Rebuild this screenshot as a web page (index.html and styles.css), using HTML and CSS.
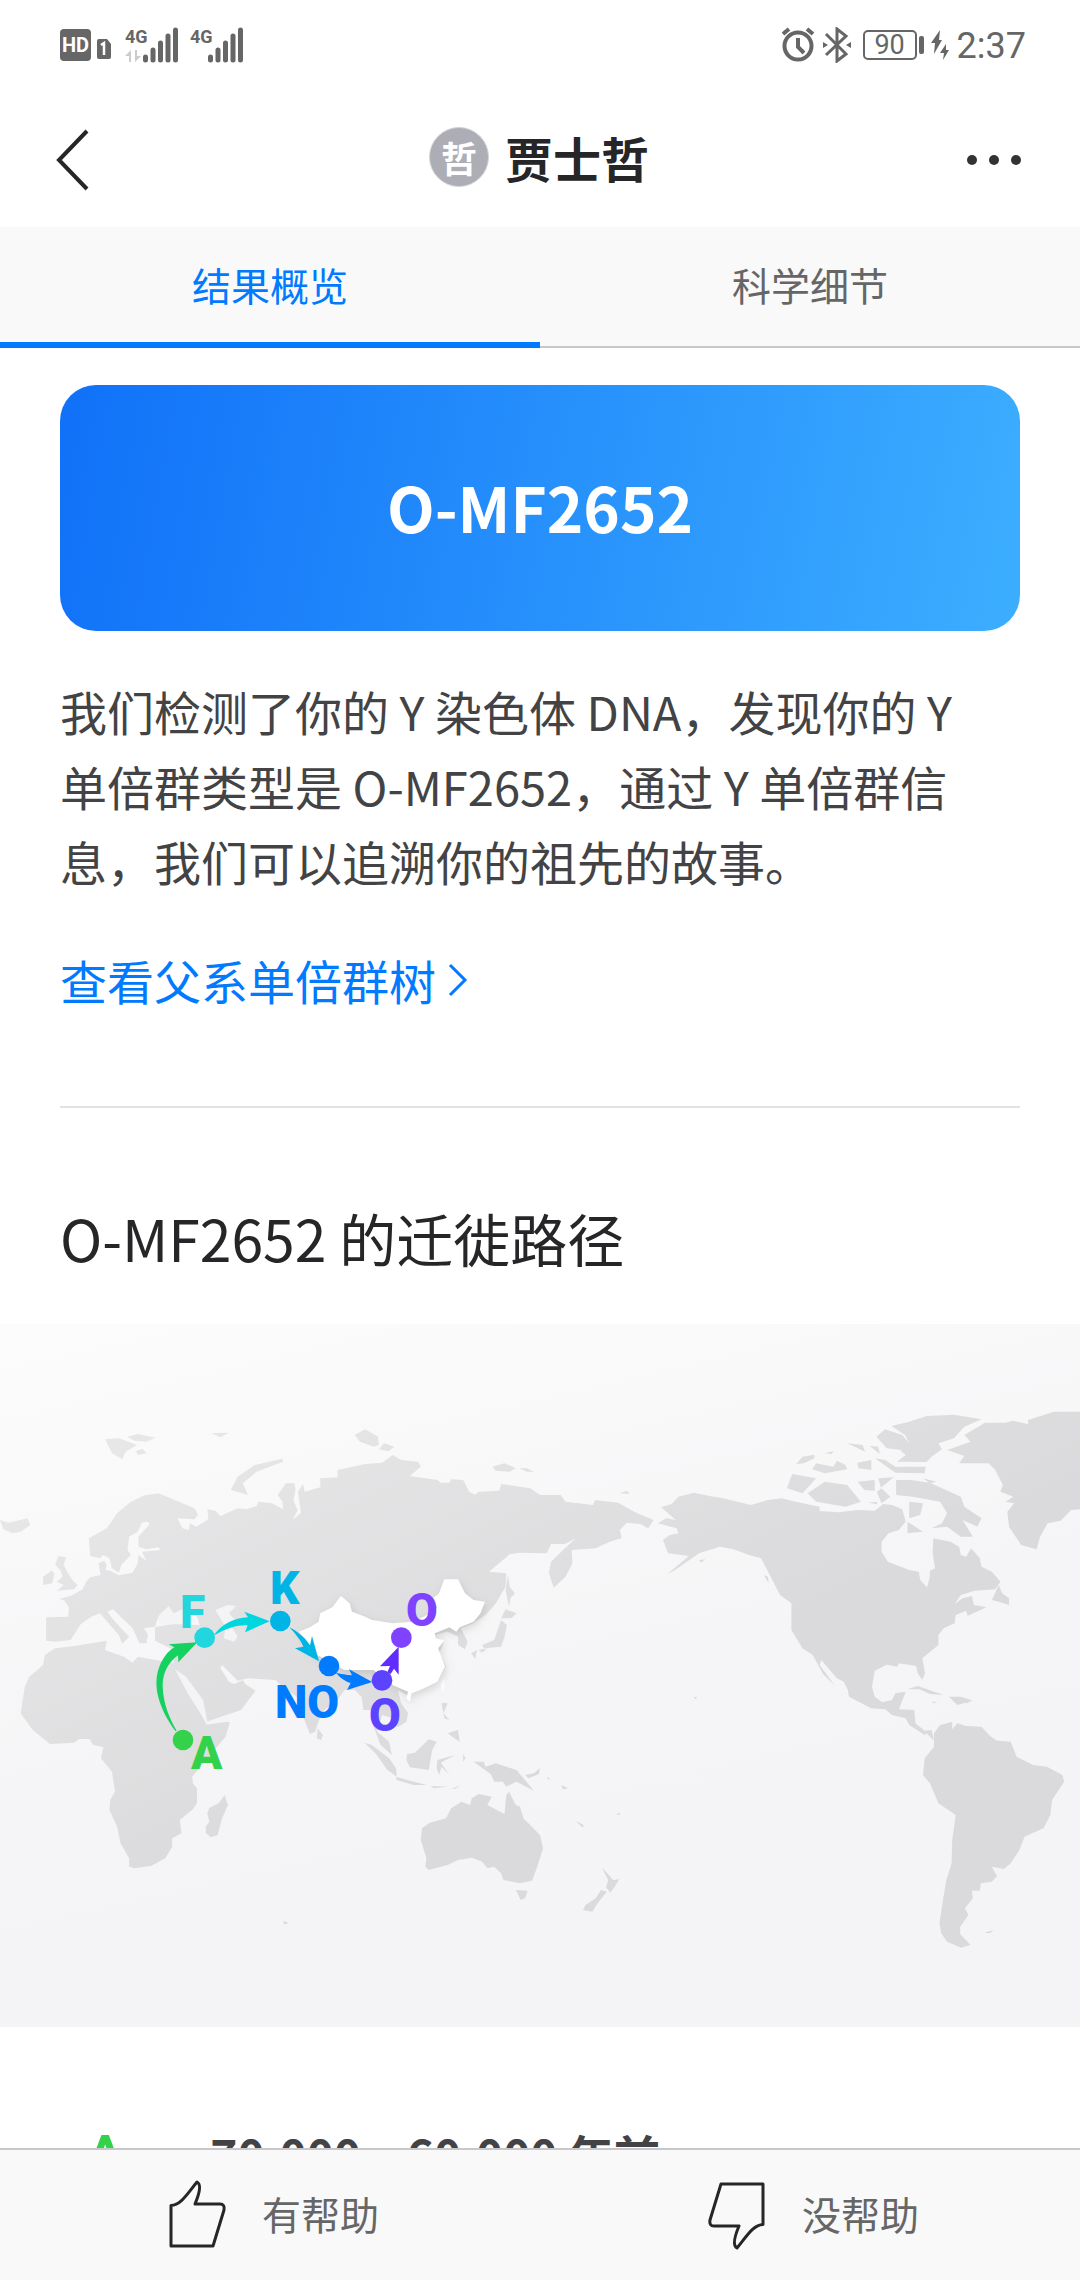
FILE: index.html
```html
<!DOCTYPE html>
<html lang="zh-CN">
<head>
  <meta charset="UTF-8" />
  <meta name="viewport" content="width=device-width, initial-scale=1.0" />
  <title>贾士哲 - 结果概览</title>
  <link rel="stylesheet" href="styles.css">
</head>
<body>
  <div class="status-bar">
    <div class="status-left">
      <span class="hd">HD</span>
      <svg class="sim" viewBox="0 0 14 20" width="14" height="20"><path d="M2 0h8l4 5v13q0 2-2 2H2q-2 0-2-2V2q0-2 2-2z" fill="#666"/><path d="M4 6l3-2v12" fill="none" stroke="#fff" stroke-width="2.5"/></svg>
      <svg class="signal" viewBox="0 -10 54 56" width="54" height="56">
        <text x="0" y="16" class="net">4G</text>
        <path d="M0 29l6-6v12H4v-6zM10 23h2v6h4l-6 6z" fill="#ccc"/>
        <path d="M20.500 30v3M28 23v10M35.500 16v17M43 9v24M50.500 3v30" class="bars"/>
      </svg>
      <svg class="signal" viewBox="0 -10 54 56" width="54" height="56">
        <text x="0" y="16" class="net">4G</text>
        <path d="M20.500 30v3M28 23v10M35.500 16v17M43 9v24M50.500 3v30" class="bars"/>
      </svg>
    </div>
    <div class="status-right">
      <svg viewBox="0 0 34 36" width="34" height="36" class="line"><circle cx="17" cy="19" r="13.5"/><path d="M17 11v9l6 6M2 7l6-5M32 7l-6-5"/></svg>
      <svg viewBox="0 0 28 36" width="28" height="36" class="line thin"><path d="M3 7l20 20-9 7V2l9 7L3 28"/><path d="M0 15l5 3-5 3zM28 15l-5 3 5 3z" class="solid"/></svg>
      <span class="battery">90</span>
      <svg viewBox="0 0 18 32" width="18" height="32"><path d="M9 1L0 14h4L3 25l8-14H8zM15 15l-6 9h4l-1 7 6-10h-3z" fill="#666"/></svg>
      <span class="time">2:37</span>
    </div>
  </div>

  <header class="nav">
    <button class="icon-btn" aria-label="返回">
      <svg viewBox="0 0 34 62" width="34" height="62"><path d="M31 2L3 31l28 29" fill="none" stroke="#262628" stroke-width="4"/></svg>
    </button>
    <div class="profile">
      <span class="avatar">哲</span>
      <h1>贾士哲</h1>
    </div>
    <button class="icon-btn" aria-label="更多">
      <svg viewBox="0 0 56 12" width="56" height="12" fill="#333"><circle cx="6" cy="6" r="5"/><circle cx="28" cy="6" r="5"/><circle cx="50" cy="6" r="5"/></svg>
    </button>
  </header>

  <nav class="tabs">
    <a href="#overview" class="tab active">结果概览</a>
    <a href="#details" class="tab">科学细节</a>
  </nav>

  <main id="overview">
    <section class="intro">
      <div class="haplogroup">O-MF2652</div>
      <p>我们检测了你的 Y 染色体 DNA，发现你的 Y 单倍群类型是 O-MF2652，通过 Y 单倍群信息，我们可以追溯你的祖先的故事。</p>
      <a href="#tree" class="tree-link">查看父系单倍群树
        <svg viewBox="0 0 20 34" width="20" height="34"><path d="M2 2l15 15L2 32" fill="none" stroke="#007aff" stroke-width="3"/></svg>
      </a>
    </section>

    <h2>O-MF2652 的迁徙路径</h2>

    <svg class="map" viewBox="0 0 1080 703">
      <defs>
        <linearGradient id="sea" x1="0" y1="0" x2=".35" y2="1">
          <stop offset="0" stop-color="#fcfcfc"/>
          <stop offset=".6" stop-color="#f5f5f7"/>
          <stop offset="1" stop-color="#f4f4f7"/>
        </linearGradient>
        <linearGradient id="land" gradientUnits="userSpaceOnUse" x1="500" y1="300" x2="1100" y2="1500">
          <stop offset="0" stop-color="#e7e7e8"/>
          <stop offset="1" stop-color="#dadadc"/>
        </linearGradient>
        <filter id="glow" x="-10%" y="-10%" width="120%" height="120%">
          <feDropShadow dx="4" dy="10" stdDeviation="12" flood-color="#888" flood-opacity=".3"/>
        </filter>
      </defs>
      <rect width="1080" height="703" fill="url(#sea)"/>

      <svg width="1080" height="703" viewBox="0 12 3136 2109" preserveAspectRatio="none">
        <g fill="url(#land)">
          <!-- Eurasia -->
          <path d="M134 892L198 890 200 862 187 842 172 836 205 828 240 808 250 785 262 772 292 765 286 730 302 722 310 735 306 750 320 752 345 766 385 758 400 730 402 705 425 722 412 695 465 690 460 682 425 688 402 680 402 650 435 612 428 605 412 608 400 635 375 650 370 690 380 705 352 735 345 758 325 745 318 715 300 705 290 715 262 708 258 655 310 625 340 580 380 545 420 526 460 520 520 545 565 565 575 585 565 598 515 595 530 625 548 630 552 610 570 620 605 598 602 568 625 572 640 588 690 565 715 568 745 558 750 545 790 550 822 568 820 545 806 525 830 490 855 490 858 510 852 540 864 570 850 600 874 578 865 515 880 492 885 515 930 502 930 475 980 472 980 450 1060 432 1110 428 1140 405 1165 420 1215 425 1222 440 1190 468 1270 480 1280 488 1305 488 1310 478 1345 480 1362 515 1380 524 1390 515 1450 512 1455 492 1540 505 1568 525 1628 525 1642 545 1722 555 1728 540 1795 548 1850 580 1898 600 1882 625 1860 612 1820 608 1800 630 1805 655 1770 665 1730 685 1660 690 1662 730 1642 770 1608 803 1594 760 1600 725 1635 690 1672 655 1640 672 1600 672 1588 700 1568 700 1510 698 1480 703 1420 755 1470 760 1468 800 1440 850 1410 885 1375 910 1338 925 1358 965 1350 988 1330 975 1330 950 1300 935 1260 945 1268 958 1290 965 1275 1000 1295 1040 1270 1085 1195 1115 1190 1140 1182 1125 1155 1110 1165 1150 1185 1180 1180 1205 1155 1222 1140 1195 1110 1185 1095 1235 1130 1265 1138 1305 1105 1275 1085 1220 1078 1170 1055 1170 1050 1130 1030 1110 1000 1110 980 1140 935 1175 915 1235 900 1242 880 1190 862 1130 820 1100 800 1080 720 1075 690 1082 645 1035 640 1045 665 1085 680 1092 705 1080 712 1092 742 1112 700 1170 600 1205 560 1130 510 1050 495 985 450 962 450 922 500 912 580 915 572 890 530 870 505 882 490 858 460 890 450 920 418 925 430 945 425 970 405 970 385 925 328 868 312 875 330 900 375 950 355 972 345 945 290 880 265 890 235 912 205 960 160 965 134 962Z"/>
          <!-- Africa -->
          <path d="M160 985L215 978 310 962 305 990 360 1010 385 1028 400 1010 465 1022 510 1030 545 1090 575 1160 600 1210 668 1205 655 1250 590 1330 558 1370 560 1390 572 1405 572 1450 560 1468 522 1500 527 1540 500 1555 500 1580 480 1615 440 1637 390 1645 375 1640 375 1615 350 1570 340 1520 318 1470 320 1440 334 1415 325 1355 293 1315 300 1282 270 1275 260 1257 230 1257 215 1268 145 1272 95 1230 60 1180 72 1100 85 1070 125 1035 130 1005Z"/>
          <path d="M652 1425L662 1455 645 1495 632 1545 612 1552 598 1540 597 1520 608 1505 602 1480 608 1463 635 1450Z"/>
          <!-- British Isles, Iceland -->
          <path d="M170 708L192 712 185 735 195 755 212 782 225 795 215 808 165 812 185 795 165 785 182 770 175 750 160 735ZM125 770L150 752 158 760 152 790 125 795Z"/>
          <path d="M0 600L25 608 80 595 88 615 60 635 35 640 10 628Z"/>
          <!-- Arctic islands -->
          <path d="M305 358L345 355 398 375 365 395 355 418 325 400ZM370 350L400 342 452 353 425 365 390 362ZM395 392L415 387 425 400 400 405Z"/>
          <path d="M613 340L665 338 640 352ZM670 510L690 470 740 435 820 416 822 425 745 455 705 490 720 525ZM1030 345L1060 328 1098 350 1100 375 1085 380 1045 365ZM1100 388L1115 370 1145 380 1128 394ZM1430 440L1465 430 1498 445 1480 455 1440 452ZM1508 445L1530 445 1550 455 1530 455ZM1800 520L1820 512 1828 522Z"/>
          <!-- Japan, Sakhalin, Taiwan -->
          <path d="M1475 765L1480 800 1495 820 1482 835 1478 860 1468 810Z"/>
          <path d="M1468 868L1500 880 1485 895 1455 895ZM1455 900L1472 915 1465 950 1455 980 1405 985 1400 975 1435 960ZM1368 1000L1385 990 1380 1018ZM1390 990L1415 985 1400 998Z"/>
          <path d="M1280 1090L1290 1075 1292 1095 1284 1118Z" fill="#fff"/>
          <!-- South-east Asia -->
          <path d="M922 1225L938 1245 932 1260 920 1255ZM1058 1268L1080 1275 1130 1315 1150 1345 1152 1370 1125 1350 1090 1300ZM1150 1370L1190 1382 1240 1395 1200 1395 1152 1380ZM1182 1302L1205 1298 1245 1258 1268 1265 1255 1290 1245 1350 1190 1342 1180 1320ZM1270 1320L1322 1305 1290 1322 1280 1328 1305 1365 1282 1340 1275 1365 1268 1345ZM1282 1148L1300 1150 1288 1180 1305 1200 1290 1195ZM1300 1240L1330 1230 1335 1265 1315 1252ZM1258 1235L1278 1215ZM1375 1325L1405 1325 1410 1340 1440 1330 1500 1350 1550 1412 1500 1385 1470 1400 1460 1385 1435 1385 1425 1362ZM1525 1365L1550 1360 1568 1345 1565 1362 1535 1375ZM1345 1302L1352 1315 1345 1325ZM1250 1398L1300 1400 1260 1405ZM1310 1408L1338 1394 1322 1406Z"/>
          <!-- Australia, New Zealand -->
          <path d="M1225 1525L1248 1508 1295 1495 1310 1465 1340 1445 1365 1455 1370 1435 1390 1422 1428 1430 1415 1455 1465 1482 1470 1425 1478 1415 1498 1455 1510 1460 1520 1495 1568 1545 1577 1585 1560 1640 1545 1682 1510 1690 1462 1680 1455 1660 1435 1640 1415 1645 1400 1625 1370 1613 1330 1620 1300 1635 1245 1650 1235 1640 1238 1615 1222 1560ZM1498 1710L1532 1712 1525 1735 1512 1740Z"/>
          <path d="M1748 1643L1768 1665 1780 1680 1798 1678 1785 1700 1772 1718 1760 1702 1766 1680ZM1745 1710L1762 1715 1735 1750 1720 1775 1693 1770 1700 1755 1730 1735ZM1672 1503L1695 1515 1692 1523ZM1788 1482L1802 1478 1798 1486ZM1590 1370L1598 1378 1590 1378ZM1630 1395L1650 1405 1634 1408ZM2014 1130L2024 1132 2020 1138ZM822 1803L838 1808 826 1814Z"/>
          <!-- North and Central America -->
          <path d="M1920 562L1950 552 1970 530 2015 518 2060 528 2100 535 2180 555 2230 540 2270 535 2310 545 2380 560 2380 573 2435 577 2490 570 2540 572 2565 552 2590 555 2620 568 2630 605 2610 630 2580 640 2560 665 2560 695 2578 725 2640 750 2668 755 2672 780 2692 802 2700 770 2700 752 2715 745 2708 700 2710 655 2760 665 2785 680 2790 705 2805 710 2820 685 2845 715 2850 740 2880 755 2905 785 2890 808 2830 812 2790 825 2772 852 2795 835 2822 828 2828 855 2865 862 2810 887 2805 872 2775 885 2772 910 2740 925 2725 945 2725 975 2678 1015 2686 1060 2678 1080 2665 1060 2660 1038 2610 1030 2605 1040 2575 1034 2540 1052 2532 1100 2540 1130 2562 1147 2590 1140 2600 1120 2630 1115 2610 1168 2655 1170 2658 1210 2685 1232 2705 1230 2712 1262 2690 1240 2685 1245 2640 1215 2630 1195 2590 1185 2570 1168 2530 1165 2465 1130 2462 1110 2450 1085 2430 1075 2385 1020 2380 1035 2425 1098 2390 1062 2360 1005 2330 985 2298 930 2298 850 2265 825 2240 775 2210 715 2175 705 2130 688 2090 680 2030 700 1960 750 1938 762 2000 708 1940 700 1925 660 1945 645 1970 640 1965 625 1910 610 1935 595 1962 600Z"/>
          <path d="M2218 765L2230 770 2232 790ZM2262 805L2300 825 2312 850 2290 830ZM2880 840L2900 795 2910 820 2930 835 2930 855 2900 845ZM2635 1108L2665 1098 2740 1125 2700 1122 2670 1108ZM2755 1130L2790 1130 2825 1142 2780 1155ZM2705 1145L2722 1146 2712 1150ZM2800 1145L2818 1147 2806 1150ZM2030 720L2048 718 2036 728Z"/>
          <!-- Canadian Arctic and Greenland -->
          <path d="M2588 318L2640 305 2690 288 2770 284 2850 298 2800 320 2770 355 2725 370 2735 388 2705 410 2690 426 2605 425 2630 405 2615 392 2640 370 2628 345ZM2545 350L2570 328 2620 345 2640 370 2620 390 2575 385ZM2312 432L2330 410 2365 404 2365 415 2335 430ZM2358 448L2370 430 2420 440 2430 422 2455 435 2460 448 2395 460ZM2300 462L2370 475 2330 520 2285 505ZM2345 520L2395 485 2460 495 2500 545 2455 560 2370 545ZM2490 428L2530 420 2530 450 2492 445ZM2540 415L2570 420 2600 440 2688 440 2685 460 2600 458ZM2490 485L2540 480 2540 512 2510 510ZM2550 475L2595 472 2558 503ZM2546 515L2560 505 2585 530 2560 550ZM2602 480L2645 480 2700 488 2790 530 2800 560 2850 595 2838 620 2795 600 2825 650 2790 650 2750 620 2705 625 2735 610 2750 580 2730 545 2650 530 2602 525ZM2640 545L2680 550 2672 585 2640 595ZM2635 605L2680 635 2635 640ZM2460 370L2505 375 2512 395ZM2525 378L2550 380 2555 402ZM2395 400L2420 393 2415 402ZM2680 475L2720 485 2700 490ZM2520 548L2545 545 2548 553Z"/>
          <path d="M3136 275L3060 275 2985 300 2985 312 2940 302 2920 308 2860 308 2800 345 2818 365 2750 390 2800 408 2785 430 2870 430 2890 450 2912 495 2905 515 2942 530 2920 545 2945 550 2925 575 2930 620 2965 675 3010 688 3020 650 3042 610 3080 602 3110 570 3136 568Z"/>
          <!-- South America -->
          <path d="M2712 1240L2730 1215 2765 1205 2765 1228 2780 1210 2805 1218 2850 1220 2875 1248 2895 1262 2935 1265 2952 1310 3000 1335 3040 1340 3085 1365 3090 1385 3055 1440 3050 1485 3030 1525 2975 1550 2960 1590 2935 1630 2915 1647 2880 1640 2895 1668 2880 1685 2848 1690 2845 1712 2822 1712 2825 1735 2802 1765 2812 1785 2788 1820 2788 1842 2818 1875 2790 1883 2750 1865 2733 1840 2728 1810 2738 1740 2748 1680 2763 1630 2765 1560 2775 1485 2725 1450 2700 1390 2680 1365 2685 1315 2712 1280ZM2858 1838L2885 1830 2875 1840Z"/>
        </g>
        <!-- Red Sea, Caspian -->
        <g fill="#f4f4f6">
          <path d="M508 1048L540 1070 590 1140 602 1205 660 1190 665 1204 600 1214 585 1185 545 1120Z"/>
          <path d="M625 870L660 855 685 858 665 880 682 900 672 920 690 950 680 965 650 955 655 920Z"/>
          <path d="M462 885L490 860 505 880 530 868 575 905 480 915 460 905Z"/>
        </g>
        <!-- China -->
        <path filter="url(#glow)" fill="#fff" d="M868 935L900 922 925 905 930 880 965 862 990 828 1015 850 1022 875 1060 890 1080 900 1140 910 1200 905 1250 880 1270 860 1245 845 1275 820 1290 778 1330 778 1350 820 1375 840 1408 845 1395 880 1375 905 1335 922 1325 935 1305 922 1262 940 1265 955 1290 962 1272 985 1292 1040 1270 1085 1220 1110 1195 1120 1190 1145 1180 1135 1185 1115 1140 1095 1110 1070 1085 1050 1000 1050 950 1020 910 1000 888 965Z"/>
      </svg>

      <!-- Migration route -->
      <svg x="130" y="216" width="380" height="240" viewBox="0 0 1140 720">
        <path fill="#15d160" d="M137 574C90 510 65 440 88 380C98 355 112 335 133 322L116 313 202 307 145 367 144 346C112 370 98 400 98 440C100 490 118 535 140 572Z"/>
        <path fill="#00d6de" d="M254 282C280 250 310 235 354 232L343 215 419 244 345 277 353 256C320 255 290 265 256 284Z"/>
        <path fill="#00b4e6" d="M478 262C510 278 530 300 540 316L546 288 567 364 495 325 520 320C512 300 495 280 478 262Z"/>
        <path fill="#007aff" d="M618 398C635 402 648 404 666 406L657 388 727 426 651 450 662 429C640 422 628 410 618 398Z"/>
        <path fill="#5f2eff" d="M772 397L780 378 750 379 806 320 806 404 792 386 782 402Z"/>
        <circle cx="159" cy="600" r="31" fill="#34d14b"/>
        <circle cx="224" cy="293" r="31" fill="#22d6de"/>
        <circle cx="451" cy="243" r="31" fill="#00b4e6"/>
        <circle cx="597" cy="378" r="31" fill="#007aff"/>
        <circle cx="756" cy="421" r="31" fill="#5c43ff"/>
        <circle cx="814" cy="293" r="31" fill="#7f43ff"/>
      </svg>
      <g class="map-label">
        <text x="191" y="445" fill="#34d14b">A</text>
        <text x="180" y="304" fill="#22d6de">F</text>
        <text x="270" y="280" fill="#00b4e6">K</text>
        <text x="275" y="394" fill="#007aff">NO</text>
        <text x="369" y="407" fill="#5c43ff">O</text>
        <text x="406" y="302" fill="#7f43ff">O</text>
      </g>
    </svg>

    <section class="timeline">
      <span class="letter">A</span>
      <h3>70,000 – 60,000 年前</h3>
    </section>
  </main>

  <footer class="feedback">
    <button>
      <svg viewBox="0 0 60 70" width="60" height="70"><path d="M4 25.500C14 25 20 14 30 2Q36 5 28 24H53Q58 24 57 30L46 66H4Z"/></svg>
      有帮助
    </button>
    <button>
      <svg viewBox="0 0 60 70" width="60" height="70"><path d="M56 44.500C46 45 40 56 30 68Q24 65 32 46H7Q2 46 3 40L14 4H56Z"/></svg>
      没帮助
    </button>
  </footer>
</body>
</html>
```
FILE: styles.css
```css
* { box-sizing: border-box; margin: 0; padding: 0; }
body {
  display: flex;
  flex-direction: column;
  height: 100vh;
  font-family: "Noto Sans CJK SC", sans-serif;
  background-color: #fff;
  color: #262628;
}
button {
  border: none;
  background: none;
  font-family: inherit;
  cursor: pointer;
}
a { text-decoration: none; }
svg { display: block; flex: none; }

.status-bar {
  display: flex;
  justify-content: space-between;
  align-items: center;
  height: 90px;
  padding: 0 54px 0 60px;
  font-family: Roboto, sans-serif;
  color: #666;
}
.status-left, .status-right { display: flex; align-items: center; }
.hd {
  width: 31px;
  height: 32px;
  border-radius: 4px;
  background-color: #666;
  color: #fff;
  font-size: 20px;
  font-weight: bold;
  line-height: 32px;
  text-align: center;
}
.sim { margin: 8px 14px 0 6px; }
.signal { margin-right: 11px; }
.net { font-size: 18px; font-weight: bold; fill: #666; }
.bars { stroke: #666; stroke-width: 5; stroke-linecap: round; }
.status-right { gap: 8px; }
.line { fill: none; stroke: #666; stroke-width: 4; }
.thin { stroke-width: 3; }
.solid { fill: #666; stroke: none; }
.battery {
  position: relative;
  width: 54px;
  height: 30px;
  margin: 0 6px 0 4px;
  border: 2px solid #666;
  border-radius: 5px;
  font-size: 27px;
  line-height: 27px;
  text-align: center;
}
.battery::after {
  content: "";
  position: absolute;
  top: 4px;
  right: -9px;
  width: 5px;
  height: 18px;
  border-radius: 2px;
  background-color: #666;
}
.time { font-size: 36px; line-height: 46px; padding-top: 2px; }

.nav {
  display: grid;
  grid-template-columns: 1fr auto 1fr;
  align-items: center;
  height: 137px;
  padding: 0 58px 3px 56px;
}
.icon-btn { padding-top: 5px; }
.icon-btn:first-child { justify-self: start; }
.icon-btn:last-child { justify-self: end; }
.profile { display: flex; align-items: center; gap: 16px; }
.avatar {
  width: 60px;
  height: 60px;
  border: 1px solid #d4d4d8;
  border-radius: 50%;
  background-color: #adadb5;
  color: #fff;
  font-size: 36px;
  font-weight: bold;
  line-height: 58px;
  text-align: center;
}
.nav h1 { font-size: 48px; font-weight: bold; line-height: 60px; }

.tabs {
  display: flex;
  height: 121px;
  background-color: #f9f9f9;
  border-bottom: 2px solid #c8c8cc;
}
.tab {
  flex: 1;
  height: 121px;
  color: #666;
  font-size: 39px;
  line-height: 115px;
  text-align: center;
}
.tab.active { color: #007aff; border-bottom: 6px solid #007aff; }

main { flex: 1; overflow: hidden; }
.intro {
  margin: 0 60px;
  padding-top: 37px;
  border-bottom: 2px solid #e2e2e4;
}
.haplogroup {
  height: 246px;
  border-radius: 36px;
  background: linear-gradient(100deg, #1071f8, #3caeff);
  color: #fff;
  font-size: 62px;
  font-weight: bold;
  line-height: 242px;
  text-align: center;
}
.intro p {
  margin-top: 42px;
  padding-right: 40px;
  color: #434345;
  font-size: 47px;
  line-height: 75px;
}
.tree-link {
  display: flex;
  align-items: center;
  gap: 12px;
  margin: 44px 0 89px;
  color: #007aff;
  font-size: 47px;
  line-height: 75px;
}
main h2 {
  margin: 87px 60px 45px;
  font-size: 57px;
  font-weight: normal;
  line-height: 84px;
}
.map { width: 100%; height: auto; }
.map-label {
  font-family: Roboto, sans-serif;
  font-size: 46px;
  font-weight: 900;
}
.timeline {
  display: flex;
  align-items: center;
  gap: 87px;
  padding: 90px 87px;
}
.timeline .letter {
  color: #34d14b;
  font-family: Roboto, sans-serif;
  font-size: 54px;
  font-weight: bold;
  line-height: 75px;
}
.timeline h3 { color: #434345; font-size: 46px; line-height: 75px; }

.feedback {
  display: flex;
  height: 132px;
  border-top: 2px solid #c8c8cc;
  background-color: #f9f9f9;
}
.feedback button {
  flex: 1;
  display: flex;
  justify-content: center;
  align-items: center;
  gap: 35px;
  padding: 0 0 4px 6px;
  color: #666;
  font-size: 39px;
}
.feedback svg { margin-top: 3px; }
.feedback path {
  fill: none;
  stroke: #262628;
  stroke-width: 3;
  stroke-linejoin: round;
}
```
